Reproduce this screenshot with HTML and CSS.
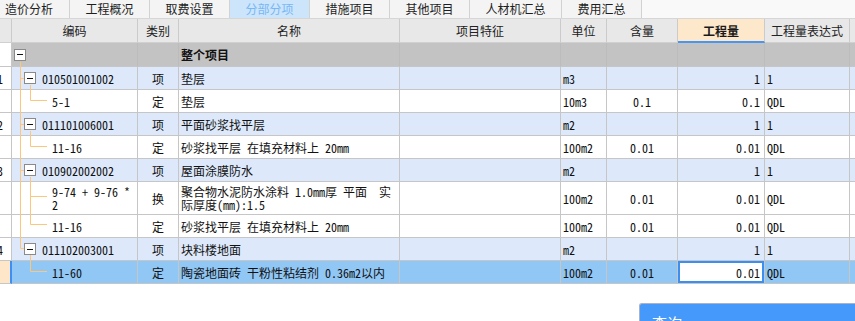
FILE: index.html
```html
<!DOCTYPE html>
<html lang="zh-CN">
<head>
<meta charset="utf-8">
<title>分部分项</title>
<link rel="stylesheet" href="styles.css">
</head>
<body>
<div class="tabs">
  <div class="tab first">造价分析</div>
  <div class="tab">工程概况</div>
  <div class="tab">取费设置</div>
  <div class="tab active">分部分项</div>
  <div class="tab">措施项目</div>
  <div class="tab">其他项目</div>
  <div class="tab wide">人材机汇总</div>
  <div class="tab">费用汇总</div>
</div>

<div class="grid">
  <div class="row head">
    <div class="c"></div>
    <div class="c">编码</div>
    <div class="c">类别</div>
    <div class="c">名称</div>
    <div class="c">项目特征</div>
    <div class="c">单位</div>
    <div class="c">含量</div>
    <div class="c hl">工程量</div>
    <div class="c">工程量表达式</div>
    <div class="c"></div>
  </div>

  <div class="row root">
    <div class="c num"></div>
    <div class="c code"><span class="tw lv0"><i class="box"><b></b></i></span></div>
    <div class="c type"></div>
    <div class="c name strong">整个项目</div>
    <div class="c"></div>
    <div class="c unit"></div>
    <div class="c qty-c"></div>
    <div class="c qty"></div>
    <div class="c expr"></div>
    <div class="c"></div>
  </div>

  <div class="row item">
    <div class="c num"><span>1</span></div>
    <div class="c code"><span class="tw lv1"><i class="box"><b></b></i>010501001002</span></div>
    <div class="c type">项</div>
    <div class="c name">垫层</div>
    <div class="c"></div>
    <div class="c unit">m3</div>
    <div class="c qty-c"></div>
    <div class="c qty">1</div>
    <div class="c expr">1</div>
    <div class="c"></div>
  </div>

  <div class="row quota">
    <div class="c num"></div>
    <div class="c code"><span class="tw lv2">5-1</span></div>
    <div class="c type">定</div>
    <div class="c name">垫层</div>
    <div class="c"></div>
    <div class="c unit">10m3</div>
    <div class="c qty-c">0.1</div>
    <div class="c qty">0.1</div>
    <div class="c expr">QDL</div>
    <div class="c"></div>
  </div>

  <div class="row item">
    <div class="c num"><span>2</span></div>
    <div class="c code"><span class="tw lv1"><i class="box"><b></b></i>011101006001</span></div>
    <div class="c type">项</div>
    <div class="c name">平面砂浆找平层</div>
    <div class="c"></div>
    <div class="c unit">m2</div>
    <div class="c qty-c"></div>
    <div class="c qty">1</div>
    <div class="c expr">1</div>
    <div class="c"></div>
  </div>

  <div class="row quota">
    <div class="c num"></div>
    <div class="c code"><span class="tw lv2">11-16</span></div>
    <div class="c type">定</div>
    <div class="c name">砂浆找平层 在填充材料上 20mm</div>
    <div class="c"></div>
    <div class="c unit">100m2</div>
    <div class="c qty-c">0.01</div>
    <div class="c qty">0.01</div>
    <div class="c expr">QDL</div>
    <div class="c"></div>
  </div>

  <div class="row item">
    <div class="c num"><span>3</span></div>
    <div class="c code"><span class="tw lv1"><i class="box"><b></b></i>010902002002</span></div>
    <div class="c type">项</div>
    <div class="c name">屋面涂膜防水</div>
    <div class="c"></div>
    <div class="c unit">m2</div>
    <div class="c qty-c"></div>
    <div class="c qty">1</div>
    <div class="c expr">1</div>
    <div class="c"></div>
  </div>

  <div class="row quota tall">
    <div class="c num"></div>
    <div class="c code"><span class="tw lv2 wrap">9-74 + 9-76 *<br>2</span></div>
    <div class="c type">换</div>
    <div class="c name wrap">聚合物水泥防水涂料 1.0mm厚 平面&nbsp; 实<br>际厚度(mm):1.5</div>
    <div class="c"></div>
    <div class="c unit">100m2</div>
    <div class="c qty-c">0.01</div>
    <div class="c qty">0.01</div>
    <div class="c expr">QDL</div>
    <div class="c"></div>
  </div>

  <div class="row quota">
    <div class="c num"></div>
    <div class="c code"><span class="tw lv2">11-16</span></div>
    <div class="c type">定</div>
    <div class="c name">砂浆找平层 在填充材料上 20mm</div>
    <div class="c"></div>
    <div class="c unit">100m2</div>
    <div class="c qty-c">0.01</div>
    <div class="c qty">0.01</div>
    <div class="c expr">QDL</div>
    <div class="c"></div>
  </div>

  <div class="row item">
    <div class="c num"><span>4</span></div>
    <div class="c code"><span class="tw lv1"><i class="box"><b></b></i>011102003001</span></div>
    <div class="c type">项</div>
    <div class="c name">块料楼地面</div>
    <div class="c"></div>
    <div class="c unit">m2</div>
    <div class="c qty-c"></div>
    <div class="c qty">1</div>
    <div class="c expr">1</div>
    <div class="c"></div>
  </div>

  <div class="row quota selected">
    <div class="c num"></div>
    <div class="c code"><span class="tw lv2">11-60</span></div>
    <div class="c type">定</div>
    <div class="c name">陶瓷地面砖 干粉性粘结剂 0.36m2以内</div>
    <div class="c"></div>
    <div class="c unit">100m2</div>
    <div class="c qty-c">0.01</div>
    <div class="c qty editing">0.01</div>
    <div class="c expr">QDL</div>
    <div class="c"></div>
  </div>
</div>

<svg class="tree" width="855" height="321" viewBox="0 0 855 321">
  <g stroke="#fcc77c" stroke-width="1" fill="none">
    <path d="M20.5 62 V248.5 H24"/>
    <path d="M20.5 78.5 H24 M20.5 124.5 H24 M20.5 170.5 H24"/>
    <path d="M30.5 85 V100.5 H47"/>
    <path d="M30.5 131 V146.5 H47"/>
    <path d="M30.5 177 V224.5 H47 M30.5 196.5 H47"/>
    <path d="M30.5 255 V271.5 H47"/>
  </g>
</svg>

<div class="popup">查询</div>
</body>
</html>
```

FILE: styles.css
```css
html, body {
  margin: 0;
  padding: 0;
}
body {
  width: 855px;
  height: 321px;
  overflow: hidden;
  position: relative;
  background: #ffffff;
  font-family: "Noto Sans CJK SC", "Noto Sans", sans-serif;
  font-size: 12px;
  color: #1a1a1a;
}

/* tabs */
.tabs {
  display: flex;
  height: 19px;
  box-sizing: border-box;
  border-bottom: 1px solid #d6d6d6;
  background: #f9f9f9;
}
.tab {
  flex: 0 0 80px;
  box-sizing: border-box;
  border-right: 1px solid #d2d2d2;
  background: #f4f4f4;
  display: flex;
  align-items: center;
  justify-content: center;
  font-size: 12px;
  line-height: 18px;
  color: #1e1e1e;
}
.tab.first {
  flex-basis: 81px;
  margin-left: -11px;
}
.tab.wide {
  flex-basis: 92px;
}
.tab.active {
  background: #cce5fb;
  color: #78b7f5;
}

/* grid */
.grid {
  width: 870px;
}
.row {
  display: grid;
  grid-template-columns: 12px 126px 41px 221px 161px 46px 71px 87px 85px 20px;
  height: 23px;
}
.c {
  box-sizing: border-box;
  border-right: 1px solid #c6c6c6;
  border-bottom: 1px solid #c6c6c6;
  display: flex;
  align-items: center;
  overflow: hidden;
  white-space: nowrap;
  min-width: 0;
}

.head {
  height: 24px;
}
.head .c {
  background: #e8e8e8;
  justify-content: center;
  color: #222;
  font-size: 12px;
  border-right-color: #cbcbcb;
  border-bottom-color: #d0d0d0;
}
.head .c.hl {
  background: #fee8cc;
  font-weight: bold;
  color: #1a1a1a;
  border-bottom: 2px solid #4896f0;
}

.root {
  height: 24px;
}
.root .c {
  background: #c3c3c3;
  border-right-color: #bcbcbc;
}
.item .c {
  background: #dde9fb;
}
.quota .c {
  background: #ffffff;
}
.tall {
  height: 33px;
}
.selected .c {
  background: #91c7f5;
}

/* body cell text */
.row:not(.head) .c {
  font-family: "Noto Sans Mono CJK SC", "Noto Sans CJK SC", monospace;
  font-size: 12px;
  line-height: 13px;
  color: #111;
}
.row .c.num {
  background: #ffffff;
  border-right-color: #c6c6c6;
}
.num span {
  margin-left: -3px;
}
.selected .c.num {
  background: #fee6c8;
  border-right: 2px solid #3f8ef2;
}
.type {
  justify-content: center;
}
.name {
  padding-left: 2px;
}
.row .c.strong {
  font-family: "Noto Sans CJK SC", sans-serif;
  font-weight: bold;
  font-size: 12px;
}
.unit {
  padding-left: 2px;
}
.qty-c {
  justify-content: center;
}
.qty {
  justify-content: flex-end;
  padding-right: 4px;
}
.expr {
  padding-left: 2px;
}
.wrap {
  white-space: normal;
}
.selected .c.editing {
  background: #ffffff;
  box-shadow: inset 0 0 0 2px #3b8ff0;
}

/* tree */
.tw {
  display: flex;
  align-items: center;
}
.lv0 {
  padding-left: 2px;
}
.lv1 {
  padding-left: 12px;
}
.lv2 {
  padding-left: 40px;
  display: block;
}
.box {
  width: 12px;
  height: 12px;
  box-sizing: border-box;
  border: 1px solid #8a8a8a;
  background: #ffffff;
  display: flex;
  align-items: center;
  justify-content: center;
  margin-right: 6px;
  flex: none;
}
.box b {
  display: block;
  width: 6px;
  height: 1px;
  background: #111;
}

.tree {
  position: absolute;
  left: 0;
  top: 0;
  pointer-events: none;
}

/* popup at bottom right, cut by the window edge */
.popup {
  position: absolute;
  left: 639px;
  top: 303px;
  width: 216px;
  height: 18px;
  overflow: hidden;
  box-sizing: border-box;
  background: #4499fa;
  border: 1px solid #aab3bf;
  border-right: none;
  border-bottom: none;
  border-radius: 3px 0 0 0;
  color: #ffffff;
  font-size: 15px;
  line-height: 20px;
  padding: 9px 0 0 12px;
}
```
